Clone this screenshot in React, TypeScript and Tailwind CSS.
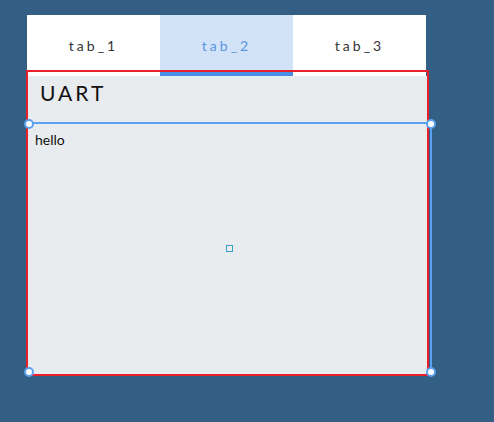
export default function App() {
  const tabs = ['tab_1', 'tab_2', 'tab_3'];
  return (
    <div className="w-[494px] h-[422px] bg-[#325f83] pt-[15px] pl-[27px] relative" style={{ fontFamily: 'Lato, "Noto Sans", sans-serif' }}>
      <div className="flex w-[399px] h-[61px] bg-white">
        {tabs.map((t, i) => (
          <div
            key={t}
            className={
              i === 1
                ? 'flex-1 flex items-center justify-center bg-[#d2e3f8] text-[#5b95e0] border-b-4 border-[#4a8fe6] pt-1 text-[14px] tracking-[3px]'
                : 'flex-1 flex items-center justify-center text-[#333] text-[14px] tracking-[3px]'
            }
          >
            {t}
          </div>
        ))}
      </div>
      <div className="w-[402px] h-[298px] bg-[#e9ecef] flex flex-col">
        <div className="h-[47px] pl-[13px] pt-[1px] text-[21px] tracking-[3px] text-[#111]">UART</div>
        <div className="pl-[8px] pt-[6px] text-[14px] text-[#111]">hello</div>
      </div>

      {/* selection overlays */}
      <div className="absolute left-[27px] top-[122px] w-[405px] h-[251px] border-t-2 border-r-2 border-[#5ca0f2]" />
      <div className="absolute left-[26px] top-[70px] w-[403px] h-[306px] border-2 border-[#e8202a]" />
      <div className="absolute left-[24px] top-[119px] w-[10px] h-[10px] rounded-full bg-white border-2 border-[#5ca0f2]" />
      <div className="absolute left-[426px] top-[119px] w-[10px] h-[10px] rounded-full bg-white border-2 border-[#5ca0f2]" />
      <div className="absolute left-[24px] top-[367px] w-[10px] h-[10px] rounded-full bg-white border-2 border-[#5ca0f2]" />
      <div className="absolute left-[426px] top-[367px] w-[10px] h-[10px] rounded-full bg-white border-2 border-[#5ca0f2]" />
      <div className="absolute left-[226px] top-[245px] w-[7px] h-[7px] border border-[#3aa0c8]" />
    </div>
  );
}
